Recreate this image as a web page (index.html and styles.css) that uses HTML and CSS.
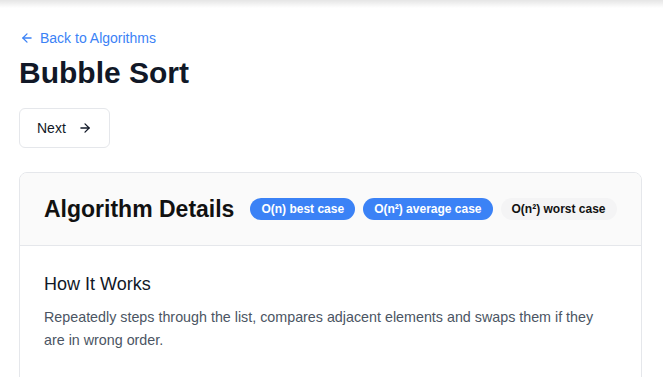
FILE: index.html
```html
<!DOCTYPE html>
<html>
<head>
<meta charset="utf-8">
<link rel="stylesheet" href="styles.css">
</head>
<body>
<div class="topshade"></div>
<main class="page">
  <a class="back" href="#">
    <svg width="14" height="14" viewBox="0 0 24 24" fill="none" stroke="currentColor" stroke-width="2.2" stroke-linecap="round" stroke-linejoin="round"><path d="M19 12H5"/><path d="M12 19l-7-7 7-7"/></svg>
    <span>Back to Algorithms</span>
  </a>
  <h1 class="title">Bubble Sort</h1>
  <div class="actions">
    <button class="btn">Next
      <svg width="14" height="14" viewBox="0 0 24 24" fill="none" stroke="currentColor" stroke-width="2.2" stroke-linecap="round" stroke-linejoin="round"><path d="M5 12h14"/><path d="M12 5l7 7-7 7"/></svg>
    </button>
  </div>
  <section class="card">
    <header class="card-head">
      <h2 class="card-title">Algorithm Details</h2>
      <span class="badge blue">O(n) best case</span>
      <span class="badge blue">O(n²) average case</span>
      <span class="badge gray">O(n²) worst case</span>
    </header>
    <div class="card-body">
      <h3 class="sub">How It Works</h3>
      <p class="desc">Repeatedly steps through the list, compares adjacent elements and swaps them if they are in wrong order.</p>
    </div>
  </section>
</main>
</body>
</html>
```
FILE: styles.css
```css
html, body { margin: 0; padding: 0; background: #fff; }
body { font-family: "Liberation Sans", Arial, sans-serif; color: #111827; }
.topshade { height: 8px; background: linear-gradient(to bottom, rgba(0,0,0,0.10), rgba(0,0,0,0)); }
.page { padding: 20px 21px 24px 19px; }
.back { display: inline-flex; align-items: center; gap: 6px; color: #3b82f6; text-decoration: none; font-size: 14px; line-height: 20px; margin-left: 1px; }
.title { font-size: 30px; font-weight: 700; line-height: 36px; margin: 6px 0 17px; color: #111827; }
.actions { display: flex; margin-bottom: 24px; }
.btn { display: inline-flex; align-items: center; gap: 12px; height: 40px; padding: 0 17px; background: #fff; border: 1px solid #e5e7eb; border-radius: 6px; font-family: inherit; font-size: 14px; color: #111827; }
.card { border: 1px solid #e5e7eb; border-radius: 8px; overflow: hidden; }
.card-head { display: flex; align-items: center; gap: 8px; background: #fafafa; padding: 0 24px; height: 72px; border-bottom: 1px solid #e5e7eb; white-space: nowrap; }
.card-title { font-size: 23px; font-weight: 700; margin: 0 8px 0 0; color: #111; flex-shrink: 0; }
.badge { flex-shrink: 0; font-size: 12px; font-weight: 700; border-radius: 999px; padding: 0 11px; line-height: 22px; }
.badge.blue { background: #3b82f6; color: #fff; }
.badge.gray { background: #f4f4f5; color: #111; }
.card-body { padding: 26px 24px 40px; }
.sub { font-size: 18px; font-weight: 400; margin: 0 0 10px; line-height: 24px; color: #111827; }
.desc { font-size: 14.3px; line-height: 23px; color: #4b5563; margin: 0; }
```
